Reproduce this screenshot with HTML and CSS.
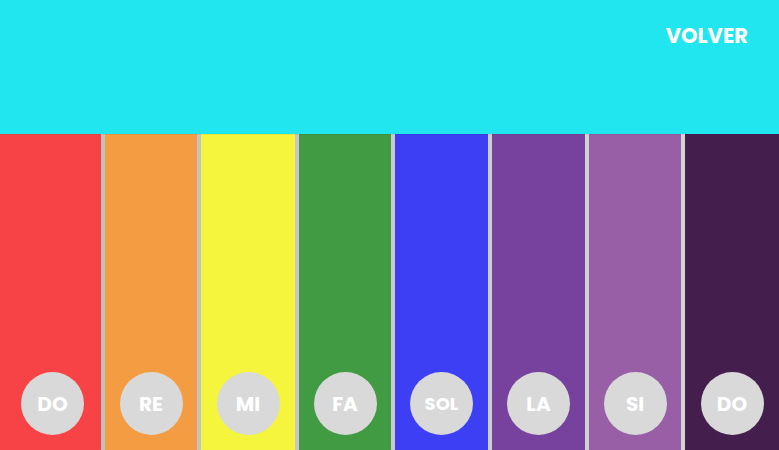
FILE: index.html
```html
<!DOCTYPE html>
<html lang="es">
<head>
<meta charset="utf-8">
<title>Piano</title>
<link rel="stylesheet" href="styles.css">
</head>
<body>
<header class="top">
  <a class="back" href="#">VOLVER</a>
</header>
<main class="keys">
  <div class="key k1"><span class="note">DO</span></div>
  <div class="key k2"><span class="note">RE</span></div>
  <div class="key k3"><span class="note">MI</span></div>
  <div class="key k4"><span class="note">FA</span></div>
  <div class="key k5"><span class="note sm">SOL</span></div>
  <div class="key k6"><span class="note">LA</span></div>
  <div class="key k7"><span class="note">SI</span></div>
  <div class="key k8"><span class="note">DO</span></div>
</main>
</body>
</html>
```
FILE: styles.css
```css
html, body {
  margin: 0;
  padding: 0;
  height: 100%;
  overflow: hidden;
}
body {
  font-family: "Poppins", "Inter", "Open Sans", sans-serif;
  display: flex;
  flex-direction: column;
}
.top {
  height: 134px;
  background: #21e6f0;
  display: flex;
  justify-content: flex-end;
  align-items: flex-start;
  padding: 20px 31px 0 0;
  box-sizing: border-box;
  box-shadow: 0 1px 0 rgba(0,0,0,0.06);
  position: relative;
  z-index: 1;
}
.back {
  color: #fff;
  font-weight: 700;
  font-size: 21px;
  text-decoration: none;
}
.keys {
  flex: 1;
  display: grid;
  grid-template-columns: 101px 92px 94px 92px 93px 93px 92px 94px;
  column-gap: 4px;
  background: linear-gradient(90deg, #bdbdbd, #d8d8d8);
}
.key {
  display: flex;
  justify-content: center;
  align-items: flex-end;
  padding-bottom: 15px;
}
.k1 { background-color: #f74346; padding-left: 4px; }
.k2 { background-color: #f49c42; }
.k3 { background-color: #f5f53e; }
.k4 { background-color: #419b42; }
.k5 { background-color: #3c3ff4; }
.k6 { background-color: #77429d; }
.k7 { background-color: #985fa6; }
.k8 { background-color: #441f4d; }
.note {
  width: 63px;
  height: 63px;
  border-radius: 50%;
  background: #d9d9d9;
  color: #fff;
  font-weight: 700;
  font-size: 20px;
  display: flex;
  align-items: center;
  justify-content: center;
}
.note.sm { font-size: 18px; }
```
